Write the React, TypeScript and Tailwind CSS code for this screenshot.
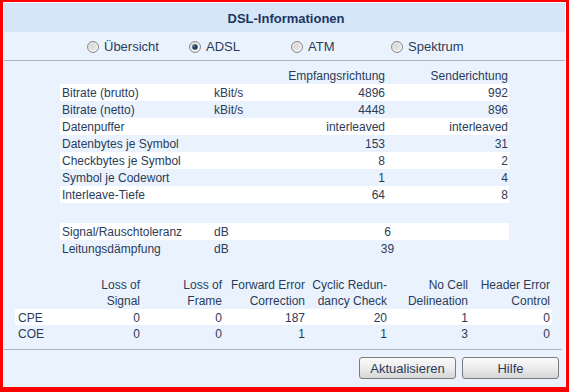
import React from 'react';

const adslRows = [
  ['Bitrate (brutto)', 'kBit/s', '4896', '992'],
  ['Bitrate (netto)', 'kBit/s', '4448', '896'],
  ['Datenpuffer', '', 'interleaved', 'interleaved'],
  ['Datenbytes je Symbol', '', '153', '31'],
  ['Checkbytes je Symbol', '', '8', '2'],
  ['Symbol je Codewort', '', '1', '4'],
  ['Interleave-Tiefe', '', '64', '8'],
];

const lineRows = [
  ['Signal/Rauschtoleranz', 'dB', '6'],
  ['Leitungsdämpfung', 'dB', '39'],
];

const errorHeads = [
  ['Loss of', 'Signal'],
  ['Loss of', 'Frame'],
  ['Forward Error', 'Correction'],
  ['Cyclic Redun-', 'dancy Check'],
  ['No Cell', 'Delineation'],
  ['Header Error', 'Control'],
];

const errorRows = [
  ['CPE', '0', '0', '187', '20', '1', '0'],
  ['COE', '0', '0', '1', '1', '3', '0'],
];

const errCols = 'grid grid-cols-[45px_82px_82px_83px_82px_81px_82px]';

function Radio({ checked }: { checked?: boolean }) {
  return (
    <svg width="12" height="12" viewBox="0 0 12 12" className="shrink-0">
      <defs>
        <linearGradient id={checked ? 'rgOn' : 'rgOff'} x1="0" y1="0" x2="1" y2="1">
          <stop offset="0" stopColor="#c9c9c9" />
          <stop offset="1" stopColor="#f4f4f4" />
        </linearGradient>
      </defs>
      <circle cx="6" cy="6" r="5.5" fill={`url(#${checked ? 'rgOn' : 'rgOff'})`} stroke="#8d8d8d" />
      <circle cx="6" cy="6" r="4" fill="none" stroke="#ffffff" strokeOpacity="0.6" />
      {checked && <circle cx="6" cy="6" r="2.7" fill="#1f3a5c" />}
      {checked && <circle cx="5.3" cy="5.2" r="0.9" fill="#6f8fb8" />}
    </svg>
  );
}

function Button({ label }: { label: string }) {
  return (
    <button className="w-[97px] h-[22px] rounded-[3px] border border-[#7b7b7b] bg-linear-to-b from-[#fafafa] via-[#ececec] to-[#d6d6d6] text-[13px] text-[#2a3c5a] leading-none">
      {label}
    </button>
  );
}

export default function App() {
  return (
    <div className="w-[569px] h-[392px] border-l-[3px] border-r-[3px] border-t-[2px] border-b-[5px] border-[#f00] font-['Liberation_Sans',Arial,sans-serif] text-[12px] text-[#2b3c5a]">
      <div className="h-full flex flex-col border-l border-r border-t border-white bg-[#eaf3fd]">
        {/* title */}
        <div className="h-[29px] bg-[#d5e6f9] flex items-center justify-center pl-[3px] pt-[3px]">
          <span className="text-[13px] font-bold text-[#1c3762]">DSL-Informationen</span>
        </div>

        {/* view switch */}
        <div className="h-[28px] flex items-center pl-[83px] pt-px text-[13px]">
          {[
            ['Übersicht', false, 'w-[102px]'],
            ['ADSL', true, 'w-[102px]'],
            ['ATM', false, 'w-[100px]'],
            ['Spektrum', false, 'w-[100px]'],
          ].map(([label, on, w]) => (
            <label key={label as string} className={`${w} flex items-center gap-[5px]`}>
              <Radio checked={on as boolean} />
              <span>{label}</span>
            </label>
          ))}
        </div>
        <div className="h-px bg-[#a5b6c8]" />

        {/* ADSL values */}
        <div className="pt-[6px] ml-[56px] w-[449px]">
          <div className="grid grid-cols-[152px_76px_99px_122px] h-[17px] items-center whitespace-nowrap">
            <span />
            <span />
            <span className="text-right pr-[2px]">Empfangsrichtung</span>
            <span className="text-right pr-px">Senderichtung</span>
          </div>
          {adslRows.map((r, i) => (
            <div
              key={r[0]}
              className={`grid grid-cols-[152px_76px_99px_122px] h-[17px] items-center whitespace-nowrap ${i % 2 === 0 ? 'bg-white' : ''}`}
            >
              <span className="pl-[2px]">{r[0]}</span>
              <span className="pl-[2px]">{r[1]}</span>
              <span className="text-right pr-[2px]">{r[2]}</span>
              <span className="text-right pr-px">{r[3]}</span>
            </div>
          ))}

          <div className="mt-[20px]">
            {lineRows.map((r, i) => (
              <div
                key={r[0]}
                className={`grid grid-cols-[152px_153px_45px_99px] h-[17px] items-center whitespace-nowrap ${i % 2 === 0 ? 'bg-white' : ''}`}
              >
                <span className="pl-[2px]">{r[0]}</span>
                <span className="pl-[2px]">{r[1]}</span>
                <span className="text-center">{r[2]}</span>
                <span />
              </div>
            ))}
          </div>
        </div>

        {/* error counters */}
        <div className="mt-[20px] ml-[11px] w-[537px]">
          <div className={`${errCols} leading-[16px] whitespace-nowrap`}>
            <span />
            {errorHeads.map(([a, b]) => (
              <span key={a + b} className="text-right pr-[2px]">
                {a}
                <br />
                {b}
              </span>
            ))}
          </div>
          {errorRows.map((r, i) => (
            <div key={r[0]} className={`${errCols} h-[16px] items-center ${i === 0 ? 'bg-white' : ''}`}>
              <span className="pl-[3px]">{r[0]}</span>
              {r.slice(1).map((v, j) => (
                <span key={j} className="text-right pr-[2px]">
                  {v}
                </span>
              ))}
            </div>
          ))}
        </div>

        <div className="mt-[8px] h-px bg-[#a5b6c8] mr-[3px]" />

        <div className="mt-[7px] flex justify-end gap-[6px] pr-[6px]">
          <Button label="Aktualisieren" />
          <Button label="Hilfe" />
        </div>
        <div className="flex-1" />
      </div>
    </div>
  );
}
